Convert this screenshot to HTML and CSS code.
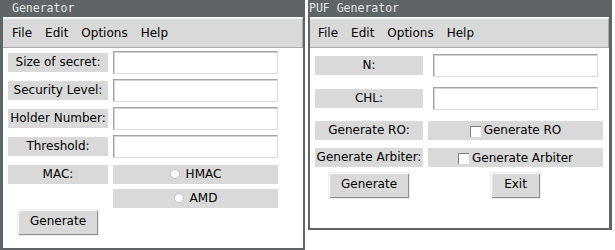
FILE: index.html
```html
<!DOCTYPE html>
<html lang="en">
<head>
    <meta charset="UTF-8">
    <title>Generator windows</title>
    <link rel="stylesheet" href="styles.css">
</head>
<body>

    <div class="desktop">

        <!-- Secret sharing generator window -->
        <div class="window win-gen">
            <div class="titlebar">Generator</div>
            <div class="client">
                <div class="menubar">
                    <span>File</span><span>Edit</span><span>Options</span><span>Help</span>
                </div>
                <div class="form form-gen">
                    <div class="label">Size of secret:</div>
                    <div class="entry"></div>

                    <div class="label">Security Level:</div>
                    <div class="entry"></div>

                    <div class="label">Holder Number:</div>
                    <div class="entry"></div>

                    <div class="label">Threshold:</div>
                    <div class="entry"></div>

                    <div class="label">MAC:</div>
                    <div class="option"><span class="radio"></span>HMAC</div>

                    <div></div>
                    <div class="option"><span class="radio"></span>AMD</div>

                    <div class="button btn-wide">Generate</div>
                </div>
            </div>
        </div>

        <!-- PUF generator window -->
        <div class="window win-puf">
            <div class="titlebar">PUF Generator</div>
            <div class="client">
                <div class="menubar">
                    <span>File</span><span>Edit</span><span>Options</span><span>Help</span>
                </div>
                <div class="form form-puf">
                    <div class="label">N:</div>
                    <div class="entry"></div>

                    <div class="label">CHL:</div>
                    <div class="entry"></div>

                    <div class="label">Generate RO:</div>
                    <div class="option"><span class="check"></span>Generate RO</div>

                    <div class="label">Generate Arbiter:</div>
                    <div class="option"><span class="check"></span>Generate Arbiter</div>

                    <div class="button btn-wide">Generate</div>
                    <div class="button btn-small">Exit</div>
                </div>
            </div>
        </div>

    </div>

</body>
</html>
```

FILE: styles.css
```css
body {
    margin: 0;
    background: #ffffff;
    font-family: "DejaVu Sans", sans-serif;
    font-size: 12px;
    color: #000000;
    overflow: hidden;
}
.desktop {
    display: flex;
    align-items: flex-start;
    gap: 3px;
}
.window {
    display: flex;
    flex-direction: column;
    background: #5f6566;
}
.win-gen {
    width: 305px;
    height: 250px;
}
.win-puf {
    width: 304px;
    height: 230px;
}
.titlebar {
    height: 17px;
    line-height: 17px;
    font-family: "DejaVu Sans Mono", monospace;
    font-size: 11.5px;
    color: #e4e6e6;
    white-space: nowrap;
}
.win-gen .titlebar {
    padding-left: 12px;
}
.win-puf .titlebar {
    padding-left: 1px;
}
.client {
    flex: 1;
    background: #ffffff;
    padding-top: 1px;
}
.win-gen .client {
    margin: 0 2px 2px 3px;
}
.win-puf .client {
    margin: 0 3px 2px 2px;
}
.menubar {
    display: flex;
    height: 28px;
    align-items: center;
    padding-left: 2.5px;
    background: #d9d9d9;
    border-top: 1px solid #f4f4f4;
    border-bottom: 1px solid #a9a9a9;
    border-right: 1px solid #a9a9a9;
}
.win-puf .menubar {
    padding-left: 1.5px;
}
.menubar span {
    padding: 0 6.5px;
}
.form {
    display: grid;
    column-gap: 5px;
    align-items: center;
    padding-left: 5px;
}
.form-gen {
    grid-template-columns: 100px 165px;
    grid-template-rows: 28px 28px 28px 28px 28px 20px 28px;
}
.form-puf {
    grid-template-columns: 108px 175px;
    grid-template-rows: 34px 33px 30px 25px 31px;
}
.label {
    height: 19px;
    line-height: 19px;
    background: #d9d9d9;
    text-align: center;
    white-space: nowrap;
}
.entry {
    width: 165px;
    height: 23px;
    box-sizing: border-box;
    background: #ffffff;
    border: 1px solid;
    border-color: #a4a4a4 #dcdcdc #dcdcdc #a4a4a4;
    box-shadow: inset 1px 1px 0 #d2d2d2;
    justify-self: center;
}
.option {
    height: 19px;
    background: #d9d9d9;
    display: flex;
    align-items: center;
    justify-content: center;
    white-space: nowrap;
}
.radio {
    width: 8px;
    height: 8px;
    border-radius: 50%;
    background: #ffffff;
    border: 1px solid #c4c4c4;
    margin-right: 6px;
}
.check {
    width: 10px;
    height: 10px;
    background: #ffffff;
    border-top: 1px solid #7c7c7c;
    border-left: 1px solid #7c7c7c;
    margin-right: 3px;
    margin-top: 2px;
}
.button {
    height: 27px;
    box-sizing: border-box;
    line-height: 23px;
    text-align: center;
    background: #d9d9d9;
    border: 1px solid #ececec;
    box-shadow: inset 1px 1px 0 #ffffff, inset -1px -1px 0 #8e8e8e;
    justify-self: center;
}
.btn-wide {
    width: 82px;
}
.btn-small {
    width: 51px;
}
```
